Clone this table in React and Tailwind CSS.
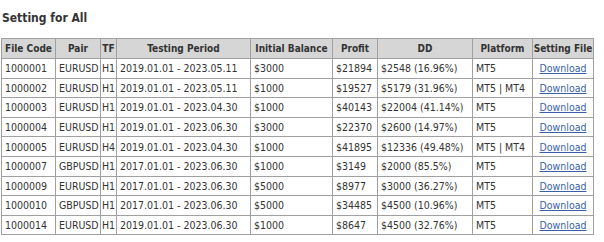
import React from "react";

const rows = [
  ["1000001", "EURUSD", "H1", "2019.01.01 - 2023.05.11", "$3000", "$21894", "$2548 (16.96%)", "MT5"],
  ["1000002", "EURUSD", "H1", "2019.01.01 - 2023.05.11", "$1000", "$19527", "$5179 (31.96%)", "MT5 | MT4"],
  ["1000003", "EURUSD", "H1", "2019.01.01 - 2023.04.30", "$1000", "$40143", "$22004 (41.14%)", "MT5"],
  ["1000004", "EURUSD", "H1", "2019.01.01 - 2023.06.30", "$3000", "$22370", "$2600 (14.97%)", "MT5"],
  ["1000005", "EURUSD", "H4", "2019.01.01 - 2023.04.30", "$1000", "$41895", "$12336 (49.48%)", "MT5 | MT4"],
  ["1000007", "GBPUSD", "H1", "2017.01.01 - 2023.06.30", "$1000", "$3149", "$2000 (85.5%)", "MT5"],
  ["1000009", "EURUSD", "H1", "2017.01.01 - 2023.06.30", "$5000", "$8977", "$3000 (36.27%)", "MT5"],
  ["1000010", "GBPUSD", "H1", "2017.01.01 - 2023.06.30", "$5000", "$34485", "$4500 (10.96%)", "MT5"],
  ["1000014", "EURUSD", "H1", "2019.01.01 - 2023.06.30", "$1000", "$8647", "$4500 (32.76%)", "MT5"],
];

const headers = ["File Code", "Pair", "TF", "Testing Period", "Initial Balance", "Profit", "DD", "Platform", "Setting File"];
const widths = ["w-[54px]", "w-[45px]", "w-[16px]", "w-[134px]", "w-[82px]", "w-[45px]", "w-[95px]", "w-[60px]", "w-[61px]"];

export default function App() {
  return (
    <div className="w-[604px] h-[242px] bg-white text-[#333] font-['DejaVu_Sans_Condensed','DejaVu_Sans',sans-serif] text-[10.5px]">
      <h2 className="pl-[2px] pt-[11px] h-[38px] text-[12px] font-bold leading-[14px] text-[#333]">Setting for All</h2>
      <table className="ml-[1px] w-[593px] border-collapse border border-[#a0a0a0] table-fixed">
        <thead>
          <tr className="h-[20px] bg-[#d6d6d6]">
            {headers.map((h, i) => (
              <th key={h} className={`${widths[i]} border border-[#a0a0a0] px-0 text-[10px] font-bold text-center whitespace-nowrap overflow-hidden leading-[12px]`}>
                {h}
              </th>
            ))}
          </tr>
        </thead>
        <tbody>
          {rows.map((r) => (
            <tr key={r[0]} className="h-[19.6px]">
              {r.map((c, i) => (
                <td key={i} className={`border border-[#a0a0a0] ${i === 2 ? "pl-[1px]" : "pl-[3px]"} pr-0 whitespace-nowrap overflow-hidden leading-[12px]`}>
                  {c}
                </td>
              ))}
              <td className="border border-[#a0a0a0] px-0 text-center leading-[12px]">
                <a href="#" className="text-[#3a5fa8] underline">Download</a>
              </td>
            </tr>
          ))}
        </tbody>
      </table>
    </div>
  );
}
